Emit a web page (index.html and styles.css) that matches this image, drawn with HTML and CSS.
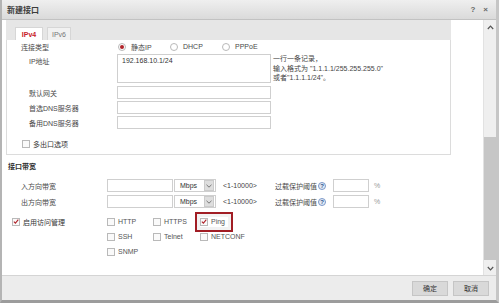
FILE: index.html
```html
<!DOCTYPE html>
<html>

<head>
  <meta charset="utf-8">
  <meta name="viewport" content="width=device-width">
  <title>新建接口</title>
  <link rel="stylesheet" href="styles.css">
</head>

<body>
  <div class="dialog">
    <div class="titlebar">
      <span class="title">新建接口</span>
      <span class="tools"><span>?</span><span>×</span></span>
    </div>

    <div class="main">
      <div class="content">
        <div class="tabs">
          <span class="tab on">IPv4</span>
          <span class="tab">IPv6</span>
        </div>

        <div class="panel">
          <div class="row r-type">
            <span class="lbl">连接类型</span>
            <span class="radio on"><i></i>静态IP</span>
            <span class="radio"><i></i>DHCP</span>
            <span class="radio"><i></i>PPPoE</span>
          </div>
          <div class="row r-ip">
            <span class="lbl sub">IP地址</span>
            <div class="textarea">192.168.10.1/24</div>
            <div class="hint">一行一条记录，<br>输入格式为 "1.1.1.1/255.255.255.0"<br>或者"1.1.1.1/24"。</div>
          </div>
          <div class="row r-field">
            <span class="lbl sub">默认网关</span>
            <span class="input wide"></span>
          </div>
          <div class="row r-field">
            <span class="lbl sub">首选DNS服务器</span>
            <span class="input wide"></span>
          </div>
          <div class="row r-field">
            <span class="lbl sub">备用DNS服务器</span>
            <span class="input wide"></span>
          </div>
          <div class="row r-multi">
            <span class="check"></span>
            <span>多出口选项</span>
          </div>
        </div>

        <div class="section">接口带宽</div>

        <div class="row bw">
          <span class="lbl">入方向带宽</span>
          <span class="input num"></span>
          <span class="select">Mbps<b><svg width="6" height="4" viewBox="0 0 6 4"><path d="M0.5 0.8 L3 3.2 L5.5 0.8" fill="none" stroke="#777" stroke-width="1"/></svg></b></span>
          <span class="range">&lt;1-10000&gt;</span>
          <span>过载保护阈值</span>
          <span class="help">?</span>
          <span class="input pct"></span>
          <span class="unit">%</span>
        </div>
        <div class="row bw second">
          <span class="lbl">出方向带宽</span>
          <span class="input num"></span>
          <span class="select">Mbps<b><svg width="6" height="4" viewBox="0 0 6 4"><path d="M0.5 0.8 L3 3.2 L5.5 0.8" fill="none" stroke="#777" stroke-width="1"/></svg></b></span>
          <span class="range">&lt;1-10000&gt;</span>
          <span>过载保护阈值</span>
          <span class="help">?</span>
          <span class="input pct"></span>
          <span class="unit">%</span>
        </div>

        <div class="access">
          <div class="acc-lbl">
            <span class="check on"><svg width="7" height="7" viewBox="0 0 7 7"><path d="M1 3.6 L2.8 5.4 L6.2 1.4" fill="none" stroke="#b0232a" stroke-width="1.3"/></svg></span>
            <span>启用访问管理</span>
          </div>
          <div class="opts">
            <span class="opt"><span class="check"></span>HTTP</span>
            <span class="opt"><span class="check"></span>HTTPS</span>
            <span class="opt hl"><span class="check on"><svg width="7" height="7" viewBox="0 0 7 7"><path d="M1 3.6 L2.8 5.4 L6.2 1.4" fill="none" stroke="#b0232a" stroke-width="1.3"/></svg></span>Ping</span>
            <span class="opt"><span class="check"></span>SSH</span>
            <span class="opt"><span class="check"></span>Telnet</span>
            <span class="opt"><span class="check"></span>NETCONF</span>
            <span class="opt"><span class="check"></span>SNMP</span>
          </div>
        </div>
      </div>

      <!-- 滚动条 -->
      <div class="scrollbar">
        <span class="arrow"><svg width="7" height="5" viewBox="0 0 7 5"><path d="M0.8 4 L3.5 1.2 L6.2 4" fill="none" stroke="#555" stroke-width="1.2"/></svg></span>
        <div class="track"><div class="thumb"></div></div>
        <span class="arrow"><svg width="7" height="5" viewBox="0 0 7 5"><path d="M0.8 1 L3.5 3.8 L6.2 1" fill="none" stroke="#555" stroke-width="1.2"/></svg></span>
      </div>
    </div>

    <div class="footer">
      <span class="btn">确定</span>
      <span class="btn">取消</span>
    </div>
  </div>
</body>

</html>
```

FILE: styles.css
```css
* {
  margin: 0;
  padding: 0;
  box-sizing: border-box;
}

body {
  font-family: "Liberation Sans", "Noto Sans CJK SC", sans-serif;
  font-size: 7px;
  color: #4a4a4a;
  background: #fff;
}

/* 窗口外框 */
.dialog {
  width: 499px;
  height: 303px;
  display: flex;
  flex-direction: column;
  border-left: 2px solid #b4b4b4;
  border-right: 3px solid #c6c6c6;
  border-bottom: 3px solid #9c9c9c;
  overflow: hidden;
}

.titlebar {
  height: 20px;
  flex: none;
  display: flex;
  align-items: center;
  justify-content: space-between;
  padding: 0 8px 1px 5px;
  background: linear-gradient(#efefef, #dadada);
  border-bottom: 1px solid #c2c2c2;
}

.title {
  font-size: 8px;
  font-weight: bold;
  color: #3c3c3c;
}

.tools {
  display: flex;
  gap: 8px;
  font-size: 8px;
  font-weight: bold;
  color: #666;
}

.main {
  height: 255px;
  flex: none;
  display: flex;
}

.content {
  width: 481px;
  padding-left: 4px;
  overflow: hidden;
}

/* 标签页 */
.tabs {
  width: 445px;
  height: 20px;
  display: flex;
  align-items: flex-end;
  gap: 4px;
  padding-left: 9px;
  background: #e6e6e6;
}

.tab {
  width: 24px;
  height: 13px;
  display: flex;
  align-items: center;
  justify-content: center;
  background: #f1f1f1;
  border: 1px solid #d6d6d6;
  border-bottom: none;
  color: #777;
}

.tab.on {
  width: 28px;
  background: #fff;
  color: #c8202a;
  font-weight: bold;
}

.panel {
  width: 445px;
  height: 115px;
  border: 1px solid #dcdcdc;
  border-top: none;
  padding-left: 14px;
}

.row {
  display: flex;
  align-items: center;
}

.lbl {
  width: 96px;
  flex: none;
}

.lbl.sub {
  padding-left: 8px;
}

.r-type {
  height: 13px;
}

.radio {
  width: 52px;
  display: flex;
  align-items: center;
  gap: 5px;
  padding-left: 1px;
}

.radio i {
  width: 8px;
  height: 8px;
  border: 1px solid #b9b9b9;
  border-radius: 50%;
  display: flex;
  align-items: center;
  justify-content: center;
}

.radio.on i::after {
  content: "";
  width: 4px;
  height: 4px;
  border-radius: 50%;
  background: #b0232a;
}

.r-ip {
  margin-top: 1px;
  align-items: flex-start;
}

.r-ip .lbl {
  padding-top: 2px;
}

.textarea {
  width: 154px;
  height: 29px;
  border: 1px solid #cfcfcf;
  padding: 2px 4px;
  color: #333;
}

.hint {
  margin-left: 2px;
  line-height: 9.5px;
  color: #444;
}

.input {
  height: 13px;
  border: 1px solid #cfcfcf;
  background: #fff;
}

.input.wide {
  width: 154px;
}

.r-field {
  margin-top: 2px;
}

.r-ip + .r-field {
  margin-top: 3px;
}

.r-multi {
  margin-top: 10px;
  gap: 3px;
  padding-left: 1px;
  color: #333;
}

.check {
  width: 8px;
  height: 8px;
  flex: none;
  border: 1px solid #b9b9b9;
  background: #fafafa;
  display: flex;
  align-items: center;
  justify-content: center;
}

.check svg {
  display: block;
}

/* 接口带宽 */
.section {
  margin-top: 6px;
  height: 12px;
  line-height: 12px;
  padding-left: 2px;
  font-weight: bold;
  color: #333;
}

.bw {
  margin-top: 6px;
  height: 13px;
}

.bw.second {
  margin-top: 3px;
}

.bw .lbl {
  width: 101px;
  padding-left: 15px;
}

.input.num {
  width: 66px;
}

.select {
  width: 42px;
  height: 13px;
  margin-left: 1px;
  display: flex;
  align-items: center;
  justify-content: space-between;
  padding-left: 5px;
  border: 1px solid #cfcfcf;
  color: #333;
}

.select b {
  width: 10px;
  height: 11px;
  margin-right: 1px;
  display: flex;
  align-items: center;
  justify-content: center;
  background: #dedede;
  border: 1px solid #cbcbcb;
}

.range {
  width: 52px;
  margin-left: 7px;
  color: #444;
}

.help {
  width: 8px;
  height: 8px;
  margin-left: 1px;
  border-radius: 50%;
  border: 1px solid #7a97c8;
  background: #e4ebf6;
  color: #2c4f8c;
  font-size: 6px;
  font-weight: bold;
  display: flex;
  align-items: center;
  justify-content: center;
}

.input.pct {
  width: 36px;
  margin-left: 7px;
}

.unit {
  margin-left: 5px;
  color: #999;
}

/* 访问管理 */
.access {
  display: flex;
  margin-top: 6px;
}

.acc-lbl {
  width: 101px;
  height: 15px;
  flex: none;
  display: flex;
  align-items: center;
  gap: 3px;
  padding-left: 6px;
  color: #333;
}

.opts {
  display: grid;
  grid-template-columns: 46px 47px 60px;
  grid-auto-rows: 15px;
}

.opt {
  display: flex;
  align-items: center;
  gap: 3px;
  color: #555;
}

.opt.hl {
  align-self: center;
  justify-self: start;
  height: 10px;
  padding-right: 3px;
  outline: 2px solid #a11d24;
  outline-offset: 3px;
  box-shadow: 0 0 0 5px rgba(0, 0, 0, 0.05);
}

/* 滚动条 */
.scrollbar {
  width: 13px;
  display: flex;
  flex-direction: column;
  background: #efefef;
  border-left: 1px solid #e2e2e2;
}

.arrow {
  height: 14px;
  flex: none;
  display: flex;
  align-items: center;
  justify-content: center;
}

.track {
  flex: 1;
}

.thumb {
  margin-top: 103px;
  height: 123px;
  background: #c6c6c6;
}

/* 底部按钮 */
.footer {
  height: 25px;
  flex: none;
  display: flex;
  justify-content: flex-end;
  align-items: center;
  gap: 5px;
  padding: 0 7px 0 0;
  background: #ececec;
  border-top: 1px solid #d4d4d4;
}

.btn {
  width: 36px;
  height: 15px;
  display: flex;
  align-items: center;
  justify-content: center;
  background: #d9d9d9;
  border: 1px solid #c5c5c5;
  color: #333;
}
```
